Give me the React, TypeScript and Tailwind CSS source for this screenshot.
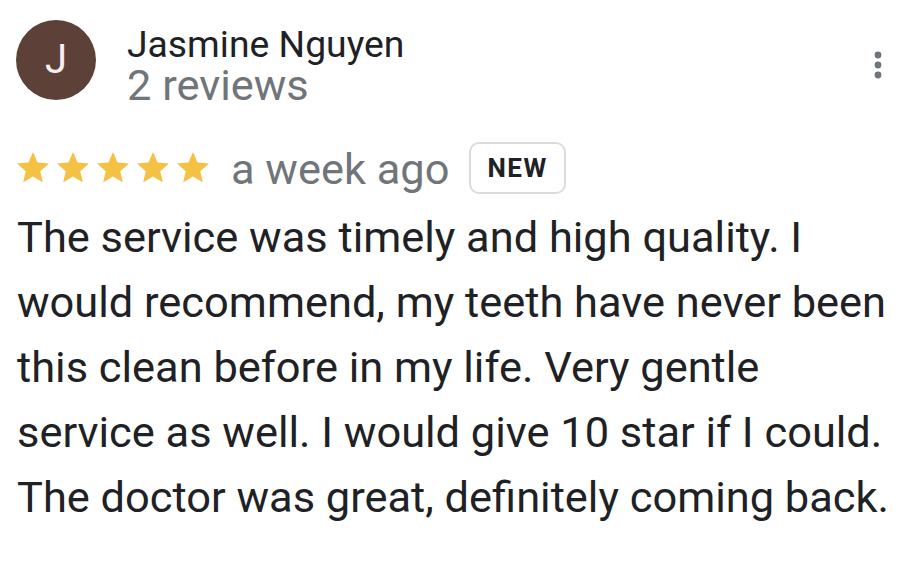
function Star() {
    return (
        <svg viewBox="2 2 20 19" className="w-[32px] h-[30.4px] shrink-0" fill="#f4c144">
            <path d="M12 17.27L18.18 21l-1.64-7.03L22 9.24l-7.19-.61L12 2 9.19 8.63 2 9.24l5.46 4.73L5.82 21z" />
        </svg>
    );
}

export default function App() {
    return (
        <div className="w-[920px] h-[562px] bg-white overflow-hidden font-['Roboto',sans-serif]">
            {/* header */}
            <div className="flex flex-row items-start pt-5 pl-4 pr-[38px]">
                <div className="flex w-20 h-20 shrink-0 items-center justify-center rounded-full bg-[#5d4037]">
                    <span className="text-[40px] leading-none text-[#f7f1ef]">J</span>
                </div>
                <div className="flex flex-col ml-[31px] mt-[4.5px]">
                    <span className="text-[37.3px] leading-[39px] text-[#202124]">Jasmine Nguyen</span>
                    <span className="text-[43.4px] leading-[44px] text-[#70757a]">2 reviews</span>
                </div>
                <div className="ml-auto mt-[31px]">
                    <svg width="8" height="28" viewBox="0 0 8 28" fill="#70757a">
                        <circle cx="4" cy="4" r="3.4" />
                        <circle cx="4" cy="14" r="3.4" />
                        <circle cx="4" cy="24" r="3.4" />
                    </svg>
                </div>
            </div>

            {/* rating row */}
            <div className="flex flex-row items-center h-[52px] mt-[34.5px] pl-[17px]">
                <div className="flex flex-row gap-2 self-start mt-[10px]">
                    <Star />
                    <Star />
                    <Star />
                    <Star />
                    <Star />
                </div>
                <span className="ml-[22px] pt-[3px] text-[43.4px] leading-[52px] text-[#70757a]">a week ago</span>
                <span className="ml-[20px] flex h-[52px] items-center rounded-[10px] border-2 border-[#dadce0] px-[16px] text-[26px] font-bold tracking-[1.5px] text-[#202124]">
                    NEW
                </span>
            </div>

            {/* review body */}
            <p className="mt-[10.6px] pl-[17px] w-[898px] text-[43.4px] leading-[65px] text-[#202124]">
                The service was timely and high quality. I would recommend, my teeth have never been this clean before in my life. Very gentle service as well. I would give 10 star if I could. The doctor was great, definitely coming back.
            </p>
        </div>
    );
}
